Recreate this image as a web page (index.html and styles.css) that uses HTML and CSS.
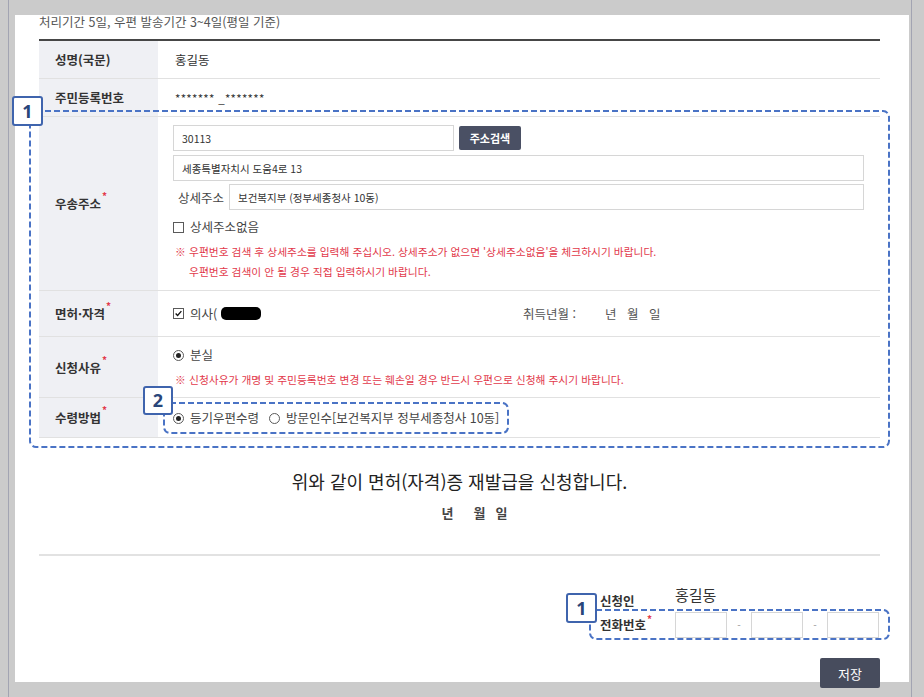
FILE: index.html
```html
<!DOCTYPE html>
<html lang="ko">
<head>
  <meta charset="UTF-8">
  <title>면허(자격)증 재발급 신청</title>
  <link rel="stylesheet" href="styles.css">
</head>
<body>
<div class="viewer">
  <div class="sheet">
    <p class="period">처리기간 5일, 우편 발송기간 3~4일(평일 기준)</p>

    <!-- 신청 정보 표 -->
    <div class="form-table">
      <div class="row row-name">
        <div class="th"><span>성명(국문)</span></div>
        <div class="td">홍길동</div>
      </div>
      <div class="row row-rrn">
        <div class="th"><span>주민등록번호</span></div>
        <div class="td rrn">******* _*******</div>
      </div>
      <div class="row row-addr">
        <div class="th"><span>우송주소<sup class="req">*</sup></span></div>
        <div class="td addr">
          <div class="zip-line">
            <input type="text" class="field zip" value="30113" readonly>
            <button type="button" class="btn-dark btn-search">주소검색</button>
          </div>
          <input type="text" class="field addr1" value="세종특별자치시 도움4로 13" readonly>
          <div class="detail-line">
            <span class="detail-label">상세주소</span>
            <input type="text" class="field addr2" value="보건복지부 (정부세종청사 10동)" readonly>
          </div>
          <label class="opt no-detail"><span class="chk"></span>상세주소없음</label>
          <div class="note note-addr">
            <span class="note-mark">※</span>
            <span>우편번호 검색 후 상세주소를 입력해 주십시오. 상세주소가 없으면 '상세주소없음'을 체크하시기 바랍니다.<br>우편번호 검색이 안 될 경우 직접 입력하시기 바랍니다.</span>
          </div>
        </div>
      </div>
      <div class="row row-lic">
        <div class="th"><span>면허·자격<sup class="req">*</sup></span></div>
        <div class="td lic">
          <div class="lic-kind">
            <label class="opt"><span class="chk checked"><svg viewBox="0 0 11 11"><path d="M2 5.6 L4.4 8 L9 2.6"/></svg></span>의사(</label>
            <span class="redact"></span>
          </div>
          <span class="acq-label">취득년월 :</span>
          <span class="ymd">년 월 일</span>
        </div>
      </div>
      <div class="row row-reason">
        <div class="th"><span>신청사유<sup class="req">*</sup></span></div>
        <div class="td reason">
          <label class="opt"><span class="radio on"></span>분실</label>
          <div class="note"><span class="note-mark">※</span><span>신청사유가 개명 및 주민등록번호 변경 또는 훼손일 경우 반드시 우편으로 신청해 주시기 바랍니다.</span></div>
        </div>
      </div>
      <div class="row row-recv">
        <div class="th"><span>수령방법<sup class="req">*</sup></span></div>
        <div class="td recv">
          <div class="recv-group">
            <svg class="dash"><rect/></svg>
            <span class="badge badge-2">2</span>
            <label class="opt"><span class="radio on"></span>등기우편수령</label>
            <label class="opt visit"><span class="radio"></span>방문인수[보건복지부 정부세종청사 10동]</label>
          </div>
        </div>
      </div>

      <!-- 주석 표시 1 -->
      <div class="annot annot-form"><svg class="dash"><rect/></svg></div>
      <span class="badge badge-1">1</span>
    </div>

    <div class="statement">
      <p class="statement-text">위와 같이 면허(자격)증 재발급을 신청합니다.</p>
      <p class="statement-date"><span class="d-y">년</span><span class="d-m">월</span><span>일</span></p>
    </div>

    <div class="applicant">
      <div class="applicant-name">
        <span class="applicant-label">신청인</span>
        <span class="applicant-value">홍길동</span>
      </div>
      <div class="phone-box">
        <svg class="dash"><rect/></svg>
        <span class="badge badge-3">1</span>
        <span class="applicant-label">전화번호<sup class="req">*</sup></span>
        <input type="text" class="field tel">
        <span class="tel-dash">-</span>
        <input type="text" class="field tel">
        <span class="tel-dash">-</span>
        <input type="text" class="field tel">
      </div>
      <div class="save-row">
        <button type="button" class="btn-dark btn-save">저장</button>
      </div>
    </div>
  </div>
</div>
</body>
</html>
```

FILE: styles.css
```css
* {
  box-sizing: border-box;
}
body {
  margin: 0;
  background: #cbcbcb;
  font-family: "Noto Sans CJK KR", "Noto Sans", sans-serif;
  color: #333;
  overflow: hidden;
}
input,
button {
  font-family: inherit;
}
p {
  margin: 0;
}
/* 뷰어 틀 */
.viewer {
  margin-left: 8px;
  width: 904px;
  height: 697px;
  padding: 15px 2px 0 6px;
  border-left: 1px solid #a2a4b2;
  border-right: 1px solid #a2a4b2;
}
.sheet {
  width: 894px;
  height: 667px;
  background: #fff;
  padding: 0 29px 0 24px;
}
.period {
  margin-bottom: 10px;
  font-size: 12.5px;
  line-height: 14px;
  color: #555;
}
/* 표 */
.form-table {
  position: relative;
  border-top: 2px solid #464646;
}
.row {
  display: flex;
  border-bottom: 1px solid #e1e1e1;
}
.row-name,
.row-rrn {
  height: 38px;
}
.row-addr {
  height: 174px;
}
.row-lic {
  height: 46px;
}
.row-reason {
  height: 61px;
}
.row-recv {
  height: 40px;
}
.th {
  width: 119px;
  flex: none;
  display: flex;
  align-items: center;
  padding-left: 16px;
  background: #eff0f4;
  font-size: 12.5px;
  font-weight: 700;
  color: #333;
}
.req {
  color: #e2394b;
  font-size: 10px;
  line-height: 1;
  vertical-align: top;
  position: relative;
  top: -3px;
  margin-left: 1px;
}
.td {
  flex: 1;
  display: flex;
  align-items: center;
  padding-left: 17px;
  font-size: 12.5px;
  color: #333;
}
.rrn {
  font-size: 11.5px;
  letter-spacing: 0.3px;
}
/* 입력 필드 */
.field {
  height: 26px;
  border: 1px solid #d6d6d6;
  padding: 0 8px;
  font-size: 10.5px;
  color: #333;
  background: #fff;
  outline: none;
}
.btn-dark {
  border: none;
  border-radius: 2px;
  background: #4a5064;
  color: #fff;
  cursor: pointer;
}
/* 주소 */
.addr {
  flex-direction: column;
  align-items: stretch;
  padding: 8px 16px 0 15px;
}
.zip-line {
  display: flex;
  align-items: center;
  height: 26px;
}
.zip {
  width: 281px;
}
.btn-search {
  width: 62px;
  height: 24px;
  margin-left: 5px;
  font-size: 11px;
  font-weight: 700;
}
.addr1 {
  width: 100%;
  margin-top: 4px;
}
.detail-line {
  display: flex;
  align-items: center;
  margin-top: 3px;
  padding-left: 5px;
}
.detail-label {
  width: 51px;
  flex: none;
  color: #444;
}
.addr2 {
  flex: 1;
}
.opt {
  display: inline-flex;
  align-items: center;
  color: #444;
  font-size: 12.5px;
  line-height: 20px;
}
.no-detail {
  margin-top: 7px;
}
.chk {
  width: 11px;
  height: 11px;
  margin-right: 6px;
  border: 1px solid #5a5a5a;
  background: #fff;
  display: inline-flex;
}
.chk svg {
  width: 100%;
  height: 100%;
  overflow: visible;
}
.chk path {
  fill: none;
  stroke: #111;
  stroke-width: 1.6;
}
.radio {
  width: 11px;
  height: 11px;
  margin-right: 6px;
  border: 1px solid #5a5a5a;
  border-radius: 50%;
  background: #fff;
  display: inline-flex;
  align-items: center;
  justify-content: center;
}
.radio.on::after {
  content: "";
  width: 5px;
  height: 5px;
  border-radius: 50%;
  background: #222;
}
.note {
  display: flex;
  margin-left: 2px;
  font-size: 10.75px;
  line-height: 20px;
  color: #e2394b;
}
.note-addr {
  margin-top: 5px;
}
.note-mark {
  width: 14px;
  flex: none;
}
/* 면허/자격 */
.lic {
  padding-left: 15px;
}
.lic-kind {
  width: 350px;
  display: flex;
  align-items: center;
}
.redact {
  width: 40px;
  height: 13px;
  margin-left: 4px;
  background: #000;
  border-radius: 5px;
}
.acq-label {
  color: #555;
}
.ymd {
  margin-left: 29px;
  color: #555;
  word-spacing: 7px;
}
/* 신청사유 */
.reason {
  flex-direction: column;
  align-items: flex-start;
  justify-content: flex-start;
  padding: 8px 0 0 15px;
}
.reason .note {
  margin-top: 5px;
}
/* 수령방법 */
.recv {
  align-items: flex-start;
  padding: 4px 0 0 5px;
}
.recv-group {
  position: relative;
  width: 346px;
  height: 32px;
  display: flex;
  align-items: center;
  padding-left: 10px;
}
.visit {
  margin-left: 10px;
}
/* 주석 표시 */
.annot {
  position: absolute;
  pointer-events: none;
}
.annot-form {
  left: -10px;
  top: 69px;
  width: 861px;
  height: 338px;
}
.dash {
  position: absolute;
  left: 0;
  top: 0;
  width: 100%;
  height: 100%;
  overflow: visible;
  pointer-events: none;
}
.dash rect {
  x: 1px;
  y: 1px;
  width: calc(100% - 2px);
  height: calc(100% - 2px);
  rx: 6px;
  fill: none;
  stroke: #4a73c5;
  stroke-width: 2;
  stroke-dasharray: 6 3;
}
.badge {
  position: absolute;
  z-index: 2;
  width: 31px;
  height: 30px;
  background: #fff;
  border: 2px solid #3f64ad;
  border-radius: 3px;
  color: #29467a;
  font: 700 18px/26px "Noto Sans", sans-serif;
  text-align: center;
}
.badge-1 {
  left: -27px;
  top: 55px;
}
.badge-2 {
  left: -20px;
  top: -16px;
  width: 30px;
  height: 29px;
  line-height: 25px;
}
.badge-3 {
  left: -23px;
  top: -16px;
}
/* 신청 문구 */
.statement {
  margin-top: 31px;
  padding-bottom: 31px;
  border-bottom: 2px solid #e2e2e2;
  text-align: center;
}
.statement-text {
  font-size: 18px;
  line-height: 24px;
  color: #222;
}
.statement-date {
  margin-top: 10px;
  padding-left: 30px;
  font-size: 13px;
  line-height: 20px;
  font-weight: 700;
  color: #444;
}
.d-y {
  margin-right: 20px;
}
.d-m {
  margin-right: 10px;
}
/* 신청인 */
.applicant {
  width: 280px;
  margin: 33px 0 0 auto;
}
.applicant-name {
  display: flex;
  align-items: flex-end;
  height: 20px;
}
.applicant-label {
  width: 75px;
  flex: none;
  font-size: 12.5px;
  line-height: 16px;
  font-weight: 700;
  color: #333;
}
.applicant-value {
  font-size: 15px;
  line-height: 20px;
  margin-bottom: 4px;
  color: #333;
}
.phone-box {
  position: relative;
  display: flex;
  align-items: center;
  height: 31px;
  margin: 0 -10px 0 -11px;
  padding: 0 10px 0 11px;
}
.tel {
  width: 52px;
}
.tel-dash {
  width: 24px;
  text-align: center;
  font-size: 10px;
  color: #999;
}
.save-row {
  display: flex;
  justify-content: flex-end;
  margin-top: 18px;
}
.btn-save {
  width: 60px;
  height: 30px;
  background: #474c5d;
  font-size: 13px;
}
```
